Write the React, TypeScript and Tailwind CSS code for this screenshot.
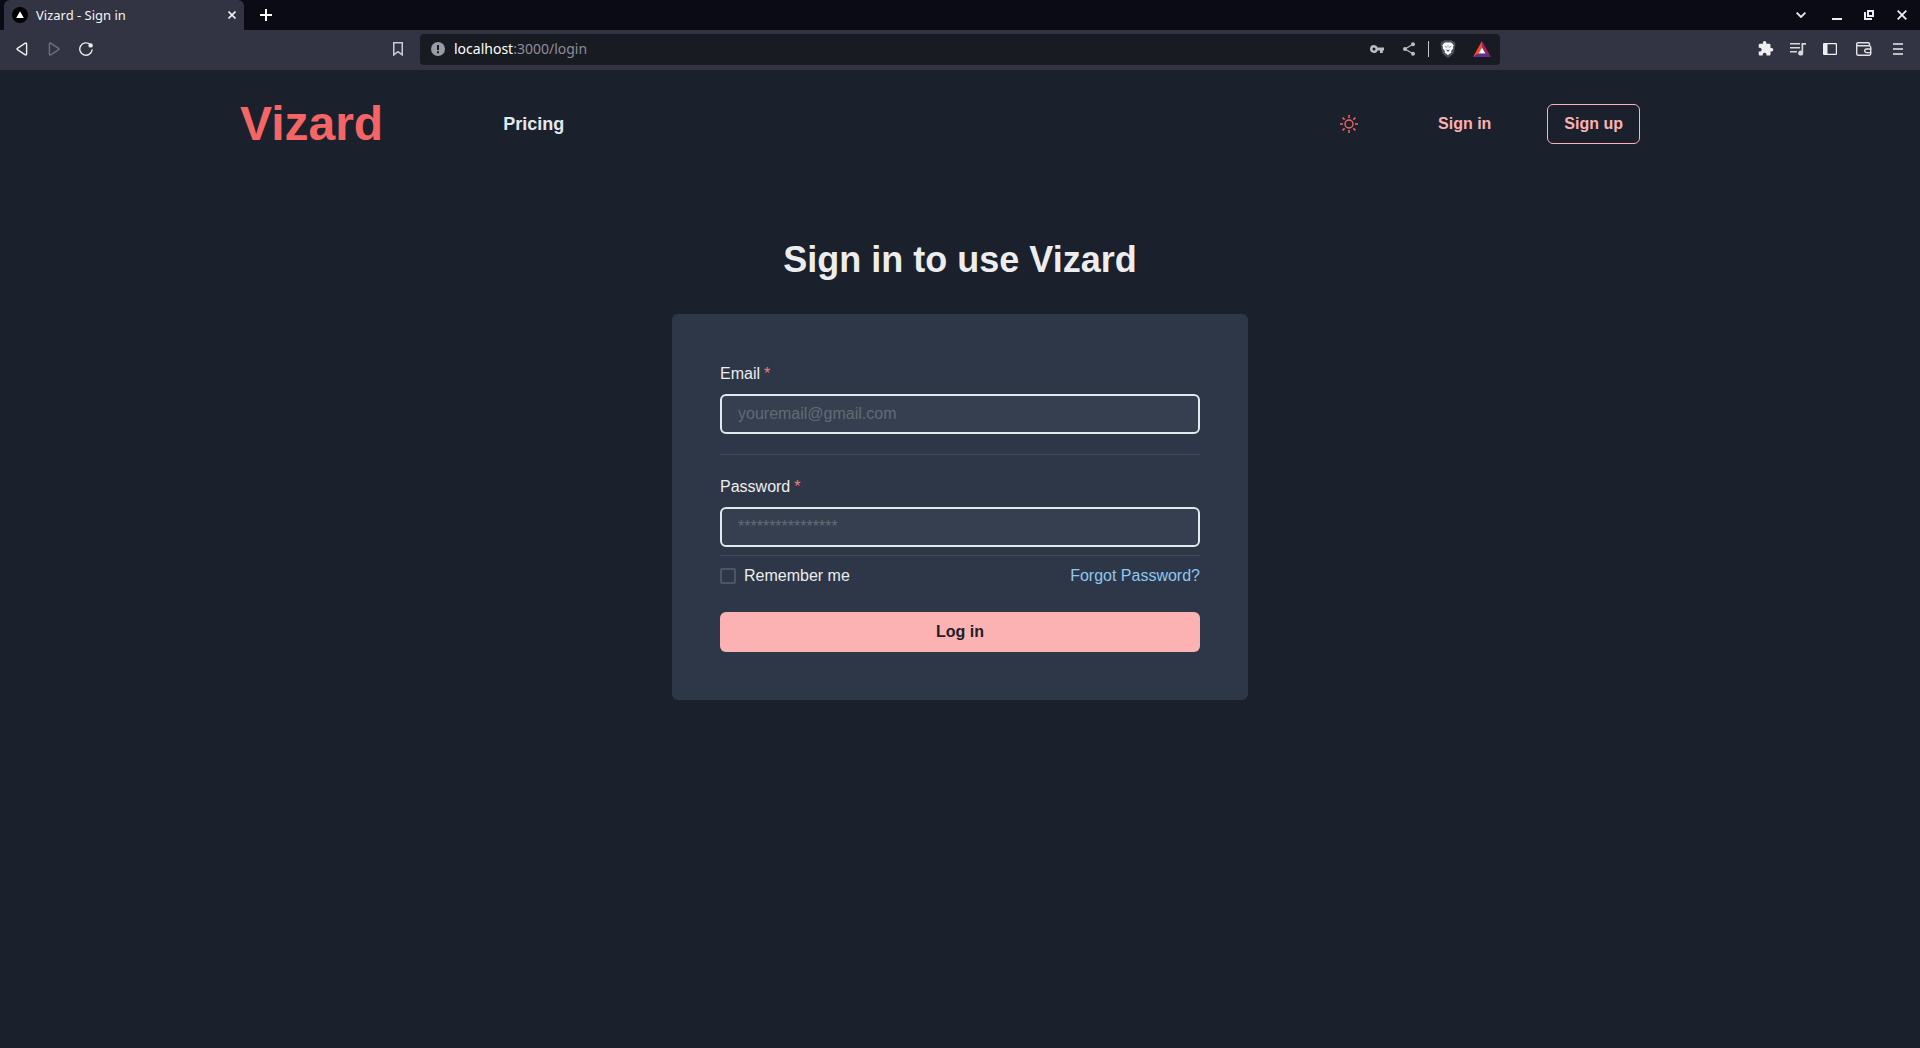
import type { ReactNode } from "react";

function ChromeButton({ label, className = "w-8", children }: { label: string; className?: string; children: ReactNode }) {
  return (
    <button type="button" aria-label={label} className={`flex h-7 shrink-0 items-center justify-center ${className}`}>
      {children}
    </button>
  );
}

function TabStrip() {
  return (
    <div className="flex h-[30px] items-center bg-[#0a0b14] pr-0.5 pl-1">
      <div className="flex h-full w-60 items-center rounded-t-md bg-[#323443] pr-1 pl-2">
        <svg width="16" height="16" viewBox="0 0 16 16" aria-hidden="true">
          <circle cx="8" cy="8" r="8" fill="#000" />
          <path d="M8 4.2 11.8 11H4.2Z" fill="#fff" />
        </svg>
        <span className="ml-2 flex-1 truncate text-[13px] leading-5 text-[#f4f4f6]">Vizard - Sign in</span>
        <button type="button" aria-label="Close tab" className="p-1">
          <svg width="8" height="8" viewBox="0 0 8 8" stroke="#f0f0f2" strokeWidth="1.6">
            <path d="M.5.5l7 7M7.5.5l-7 7" />
          </svg>
        </button>
      </div>
      <ChromeButton label="New tab" className="ml-1.5 w-8">
        <svg width="12" height="12" viewBox="0 0 12 12" stroke="#fff" strokeWidth="2">
          <path d="M6 0v12M0 6h12" />
        </svg>
      </ChromeButton>
      <div className="ml-auto flex items-center">
        <ChromeButton label="Search tabs" className="mr-1 w-8">
          <svg width="10" height="6" viewBox="0 0 10 6" fill="none" stroke="#eee" strokeWidth="1.8">
            <path d="M.6.7 5 5 9.4.7" />
          </svg>
        </ChromeButton>
        <ChromeButton label="Minimize">
          <svg width="10" height="10" viewBox="0 0 10 10" fill="#eee">
            <path d="M0 8h10v2H0z" />
          </svg>
        </ChromeButton>
        <ChromeButton label="Restore" className="mr-px w-8">
          <svg width="10" height="10" viewBox="0 0 10 10" fill="#eee">
            <path fillRule="evenodd" d="M3 0h7v7H3Zm2 2v3h3V2Z" />
            <path d="M0 2h2v6h6v2H0Z" />
          </svg>
        </ChromeButton>
        <ChromeButton label="Close window">
          <svg width="10" height="10" viewBox="0 0 10 10" stroke="#eee" strokeWidth="1.8">
            <path d="M.7.7l8.6 8.6M9.3.7.7 9.3" />
          </svg>
        </ChromeButton>
      </div>
    </div>
  );
}

function AddressBar() {
  return (
    <div className="flex h-[31px] w-[56.25%] items-center rounded bg-[#191b22] pr-0.5 pb-px pl-[11px]">
      <svg width="14" height="14" viewBox="0 0 14 14" aria-hidden="true">
        <circle cx="7" cy="7" r="7" fill="#9a9ca5" />
        <path d="M6 3h2v5H6zM6 9.3h2v2H6z" fill="#191b22" />
      </svg>
      <button type="button" className="ml-[9px] min-w-0 flex-1 cursor-text truncate text-left text-sm text-white">
        localhost<span className="text-[#8b8e96]">:3000/login</span>
      </button>
      <ChromeButton label="Passwords">
        <svg width="14" height="8" viewBox="0 0 14 8" fill="#bcbdc2">
          <path fillRule="evenodd" d="M4 0a4 4 0 0 1 3.7 2.6H14v2.9h-1.2V8H10V5.5H7.7A4 4 0 1 1 4 0Zm0 2.5a1.5 1.5 0 1 0 0 3 1.5 1.5 0 0 0 0-3Z" />
        </svg>
      </ChromeButton>
      <ChromeButton label="Share">
        <svg width="12" height="14" viewBox="0 0 12 14" fill="#bcbdc2">
          <path d="M10 2.3 2 7l8 4.7" fill="none" stroke="#bcbdc2" strokeWidth="1.2" />
          <circle cx="10" cy="2.3" r="2" />
          <circle cx="2" cy="7" r="2" />
          <circle cx="10" cy="11.7" r="2" />
        </svg>
      </ChromeButton>
      <span className="mx-[3px] h-4 w-px bg-[#c4c5c9]" />
      <ChromeButton label="Brave Shields" className="mr-0.5 w-8">
        <svg width="16" height="18" viewBox="0 0 16 18">
          <path d="M4.2.2h7.6l1.3 1.3 1.4 0 1 2.800-1.4 7.600c-.4 2.200-3 3.900-6.100 5.900-3.100-2-5.700-3.700-6.100-5.900L.5 4.300l1-2.800h1.400Z" fill="#4b4d60" />
          <path d="M5 2.600h6l1.200.9 1.500 1.700-.7 1.800.1 1.500-2 2.600.2 1.600L8 15l-3.300-2.300.2-1.600-2-2.600L3 7l-.7-1.800 1.500-1.700Z" fill="#fff" />
          <path d="m4.300 6 2.500.7-.6 1Zm7.400 0-2.500.7.6 1ZM6.200 10.500 8 9.700l1.800.8L8 11.700Z" fill="#4b4d60" />
          <path d="M8 4.500v4M5.600 8.800l1 1.200M10.400 8.800l-1 1.200" stroke="#9799a6" strokeWidth=".8" />
        </svg>
      </ChromeButton>
      <ChromeButton label="Brave Rewards" className="w-8">
        <svg width="18" height="16" viewBox="0 0 18 16">
          <path d="M9 0 0 16l5.500-3.400L9 6.500Z" fill="#ff4724" />
          <path d="m9 0 9 16-5.500-3.400L9 6.500Z" fill="#9e1f63" />
          <path d="M0 16h18l-5.500-3.400h-7Z" fill="#662d91" />
          <path d="m9 6.400 3.500 6.200h-7Z" fill="#fff" />
        </svg>
      </ChromeButton>
    </div>
  );
}

function Toolbar() {
  return (
    <div className="flex h-10 items-center bg-[#323443] pb-px">
      <div className="flex flex-1 items-center px-1.5 pb-px">
        <ChromeButton label="Back">
          <svg width="12" height="14" viewBox="0 0 12 14" fill="none" stroke="#eee" strokeWidth="1.4" strokeLinejoin="round">
            <path d="M9.3 1.2 1.4 6.3a.8.8 0 0 0 0 1.4l7.9 5.1a.8.8 0 0 0 1.3-.7V1.9a.8.8 0 0 0-1.3-.7Z" />
          </svg>
        </ChromeButton>
        <ChromeButton label="Forward">
          <svg width="12" height="14" viewBox="0 0 12 14" fill="none" stroke="#6d6f7c" strokeWidth="1.4" strokeLinejoin="round">
            <path d="m2.7 1.2 7.9 5.1a.8.8 0 0 1 0 1.4l-7.9 5.1a.8.8 0 0 1-1.3-.7V1.9a.8.8 0 0 1 1.3-.7Z" />
          </svg>
        </ChromeButton>
        <ChromeButton label="Reload">
          <svg width="14" height="14" viewBox="0 0 14 14" fill="none">
            <path d="M11.2 2.5A6.2 6.2 0 1 0 13.1 8" stroke="#eee" strokeWidth="1.4" strokeLinecap="round" />
            <circle cx="11.6" cy="3.4" r="2.2" fill="#eee" />
          </svg>
        </ChromeButton>
        <ChromeButton label="Bookmark this page" className="ml-auto w-8">
          <svg width="10" height="14" viewBox="0 0 10 14" fill="none" stroke="#ccccd0" strokeWidth="1.5">
            <path d="M.75.75h8.5v12.1L5 9.6.75 12.85Z" />
          </svg>
        </ChromeButton>
      </div>
      <AddressBar />
      <div className="flex flex-1 items-center justify-end px-1.5 pb-px">
        <ChromeButton label="Extensions" className="w-8">
          <svg width="16" height="16" viewBox="1 1 23 23" fill="#eee">
            <path d="M20.500 11H19V7c0-1.100-.9-2-2-2h-4V3.500a2.500 2.500 0 0 0-5 0V5H4c-1.100 0-2 .9-2 2v3.800h1.500a2.700 2.700 0 0 1 0 5.400H2V20c0 1.100.9 2 2 2h3.800v-1.500a2.700 2.700 0 0 1 5.400 0V22H17c1.100 0 2-.9 2-2v-4h1.500a2.500 2.500 0 0 0 0-5Z" />
          </svg>
        </ChromeButton>
        <ChromeButton label="Media controls" className="w-8">
          <svg width="16" height="14" viewBox="0 0 16 14" fill="#d8d8dc">
            <path d="M0 1h10v1.5H0zM0 5h10v1.5H0zM0 9h7v1.5H0z" />
            <path d="M11.5 1H16v1.8h-2.8V11a2.5 2.5 0 1 1-1.7-2.3Z" />
          </svg>
        </ChromeButton>
        <ChromeButton label="Side panel" className="w-8">
          <svg width="14" height="14" viewBox="0 0 14 14" fill="#eee">
            <path fillRule="evenodd" d="M1 1h12a1 1 0 0 1 1 1v10a1 1 0 0 1-1 1H1a1 1 0 0 1-1-1V2a1 1 0 0 1 1-1Zm3.500 1.200v9.600h8.300V2.200Z" />
          </svg>
        </ChromeButton>
        <ChromeButton label="Wallet" className="mx-0.5 w-8">
          <svg width="16" height="14" viewBox="0 0 16 14" fill="none" stroke="#e2e2e5" strokeWidth="1.4" strokeLinejoin="round">
            <path d="M13.5 3.7V2a1.3 1.3 0 0 0-1.3-1.3H2A1.3 1.3 0 0 0 .7 2v9.5A1.8 1.8 0 0 0 2.5 13.3h10.7a1.5 1.5 0 0 0 1.5-1.5V5.2a1.5 1.5 0 0 0-1.5-1.500H2.500A1.600 1.600 0 0 1 .7 2.300" />
            <path d="M15.3 7h-4.800a1.800 1.800 0 0 0 0 3.600h4.800" />
          </svg>
        </ChromeButton>
        <ChromeButton label="Menu" className="w-8">
          <svg width="10" height="12" viewBox="0 0 10 12" fill="#bdbec4">
            <path d="M0 0h10v2H0zM0 5h10v2H0zM0 10h10v2H0z" />
          </svg>
        </ChromeButton>
      </div>
    </div>
  );
}

function SiteHeader() {
  return (
    <header className="flex h-[108px] items-center pr-[280px] pl-60 font-bold">
      <a href="#home" className="text-5xl text-[#f56565]">Vizard</a>
      <nav className="ml-[120px]">
        <a href="#pricing" className="text-lg text-[#e2e8f0]">Pricing</a>
      </nav>
      <div className="ml-auto flex items-center gap-10 text-[#fcb1b3]">
        <button type="button" aria-label="Switch to light theme" className="flex h-10 w-[66px] items-center justify-center">
          <svg width="18" height="18" viewBox="0 0 18 18" fill="none" stroke="#f56565">
            <circle cx="9" cy="9" r="4" strokeWidth="1.4" />
            <path d="M9 0v3M9 15v3M0 9h3M15 9h3M2.6 2.6l2 2M13.4 13.4l2 2M2.6 15.4l2-2M13.4 4.6l2-2" strokeWidth="1.5" />
          </svg>
        </button>
        <a href="#sign-in" className="flex h-10 items-center px-4">Sign in</a>
        <a href="#sign-up" className="flex h-10 items-center rounded-md border border-[#fcb1b3] px-4">Sign up</a>
      </div>
    </header>
  );
}

function Field({ id, label, type, placeholder }: { id: string; label: string; type: string; placeholder: string }) {
  return (
    <div>
      <label htmlFor={id} className="mb-2 block text-base">
        {label}
        <span className="ml-1 text-[#f67c7c]">*</span>
      </label>
      <input
        id={id}
        type={type}
        required
        placeholder={placeholder}
        className="block h-10 w-full rounded-md border-2 border-[#e2e8f0] bg-[#363f4f] px-4 text-base shadow-none outline-none placeholder:text-[#616b75]"
      />
    </div>
  );
}

export default function App() {
  return (
    <div className="min-h-screen bg-[#1a202c] font-['Liberation_Sans',Arial,sans-serif] text-[#ededee]">
      <div className="font-['Noto_Sans',sans-serif]">
        <TabStrip />
        <Toolbar />
      </div>
      <SiteHeader />
      <main className="flex flex-col items-center px-4 pt-[60px]">
        <h1 className="text-4xl leading-[44px] font-bold">Sign in to use Vizard</h1>
        <form className="mt-8 w-full max-w-xl rounded-md bg-[#2d3748] p-12" onSubmit={(e) => e.preventDefault()}>
          <Field id="email" label="Email" type="email" placeholder="youremail@gmail.com" />
          <hr className="my-5 border-[#434b5a]" />
          <Field id="password" label="Password" type="password" placeholder="****************" />
          <hr className="my-2 border-[#434b5a]" />
          <div className="flex items-center justify-between">
            <label className="flex items-center gap-2">
              <input type="checkbox" className="size-4 appearance-none rounded-xs border-2 border-[#4b5566] checked:bg-[#fcb1b3]" />
              Remember me
            </label>
            <a href="#forgot-password" className="text-[#8ec8f2]">Forgot Password?</a>
          </div>
          <button type="submit" className="mt-6 block h-10 w-full rounded-md bg-[#fcb1b3] font-bold text-[#1a202c]">
            Log in
          </button>
        </form>
      </main>
    </div>
  );
}
